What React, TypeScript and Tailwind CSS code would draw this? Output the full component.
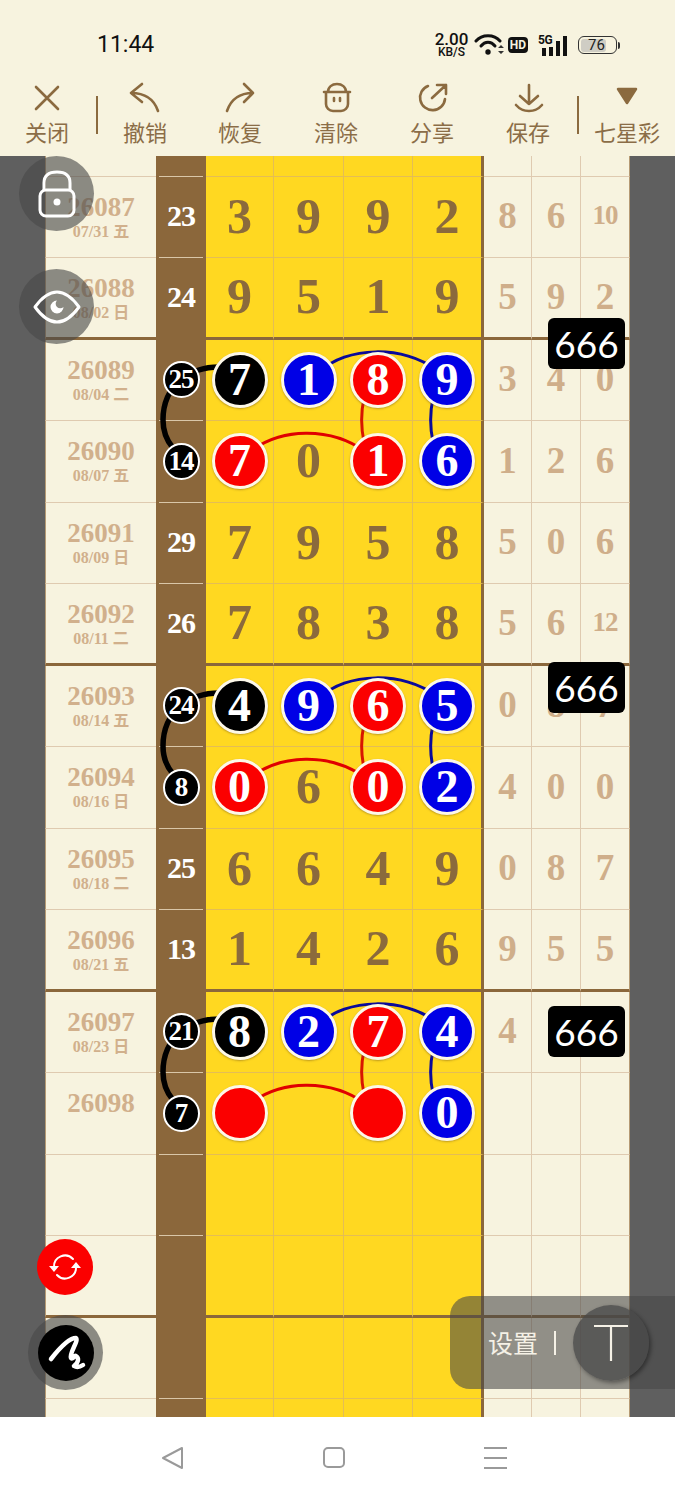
const serif = "font-['Liberation_Serif','Noto_Sans_CJK_SC',serif]";

type Ball = { n: string; c?: 'k' | 'b' | 'r' };
type Row = {
  id?: string;
  date?: string;
  sum?: string;
  sumBall?: boolean;
  main?: (string | Ball)[];
  side?: string[];
  thick?: boolean;
};

const k = (n: string): Ball => ({ n, c: 'k' });
const b = (n: string): Ball => ({ n, c: 'b' });
const r = (n: string): Ball => ({ n, c: 'r' });

const rows: Row[] = [
  { date: '07/28 二' },
  { id: '26087', date: '07/31 五', sum: '23', main: ['3', '9', '9', '2'], side: ['8', '6', '10'] },
  { id: '26088', date: '08/02 日', sum: '24', main: ['9', '5', '1', '9'], side: ['5', '9', '2'], thick: true },
  { id: '26089', date: '08/04 二', sum: '25', sumBall: true, main: [k('7'), b('1'), r('8'), b('9')], side: ['3', '4', '0'] },
  { id: '26090', date: '08/07 五', sum: '14', sumBall: true, main: [r('7'), '0', r('1'), b('6')], side: ['1', '2', '6'] },
  { id: '26091', date: '08/09 日', sum: '29', main: ['7', '9', '5', '8'], side: ['5', '0', '6'] },
  { id: '26092', date: '08/11 二', sum: '26', main: ['7', '8', '3', '8'], side: ['5', '6', '12'], thick: true },
  { id: '26093', date: '08/14 五', sum: '24', sumBall: true, main: [k('4'), b('9'), r('6'), b('5')], side: ['0', '8', '7'] },
  { id: '26094', date: '08/16 日', sum: '8', sumBall: true, main: [r('0'), '6', r('0'), b('2')], side: ['4', '0', '0'] },
  { id: '26095', date: '08/18 二', sum: '25', main: ['6', '6', '4', '9'], side: ['0', '8', '7'] },
  { id: '26096', date: '08/21 五', sum: '13', main: ['1', '4', '2', '6'], side: ['9', '5', '5'], thick: true },
  { id: '26097', date: '08/23 日', sum: '21', sumBall: true, main: [k('8'), b('2'), r('7'), b('4')], side: ['4', '', ''] },
  { id: '26098', sum: '7', sumBall: true, main: [r(''), '', r(''), b('0')], side: ['', '', ''] },
  {},
  { thick: true },
  {},
  {},
];

const mainWidths = ['w-[68px]', 'w-[70px]', 'w-[69px]', 'w-[71px]'];
const sideWidths = ['w-[48px]', 'w-[49px]', 'w-[49px]'];

function MainBall({ ball }: { ball: Ball }) {
  const bg = ball.c === 'k' ? 'bg-black' : ball.c === 'b' ? 'bg-[#0000e6]' : 'bg-[#fb0000]';
  return (
    <div className={`relative z-10 flex h-[56px] w-[56px] items-center justify-center rounded-full border-[3px] border-[#fdf8e8] text-[46px] leading-none font-bold text-white shadow-[0_1px_2px_rgba(120,90,30,0.5)] ${bg}`}>
      {ball.n}
    </div>
  );
}

function TableRow({ row, first }: { row: Row; first?: boolean }) {
  const cream = row.thick ? 'border-b-[3px] border-b-[#8b673b]' : 'border-b border-b-[#dfcab0]';
  const yellow = row.thick ? 'border-b-[3px] border-b-[#8b673b]' : 'border-b border-b-[#e4bd55]';
  return (
    <div className={`flex h-[81.5px] w-[585px] ${first ? 'mt-[-61px]' : ''} ${serif}`}>
      <div className={`flex w-[111px] flex-col items-center border-l border-l-[#b59a74] bg-[#f7f3df] pt-[13px] text-[#d1b08c] font-bold ${cream}`}>
        <div className="h-[34px] text-[27px] leading-[34px]">{row.id}</div>
        <div className="h-[16px] text-[16px] leading-[16px]">{row.date}</div>
      </div>
      <div className="flex w-[50px] flex-col bg-[#8b673b]">
        <div className="flex flex-1 items-center justify-center text-[30px] leading-none font-bold text-white">
          {row.sum && !row.sumBall && <span className="pb-[2px] tracking-[-1px]">{row.sum}</span>}
          {row.sumBall && (
            <div className="relative z-10 flex h-[37px] w-[37px] items-center justify-center rounded-full border-2 border-white bg-black text-[27px] tracking-[-1px]">
              {row.sum}
            </div>
          )}
        </div>
        <div className={`mx-[3px] h-px shrink-0 ${row.thick ? 'bg-[#8b673b]' : 'bg-[#d9c6a8]'}`} />
      </div>
      {mainWidths.map((w, i) => {
        const v = row.main?.[i];
        return (
          <div
            key={i}
            className={`flex items-center justify-center bg-[#ffd821] text-[50px] leading-none font-bold text-[#8b6a3c] ${w} ${yellow} ${typeof v === 'string' ? 'pb-[2px]' : ''} ${i === 3 ? 'border-r-[3px] border-r-[#8b673b]' : 'border-r border-r-[#e4bd55]'}`}
          >
            {typeof v === 'string' ? v : v ? <MainBall ball={v} /> : null}
          </div>
        );
      })}
      {sideWidths.map((w, i) => {
        const v = row.side?.[i] ?? '';
        return (
          <div
            key={i}
            className={`flex items-center justify-center bg-[#f7f3df] pb-[2px] font-bold leading-none text-[#cfae8a] ${v.length > 1 ? 'text-[27px] tracking-[-1px]' : 'text-[37px]'} ${w} ${cream} ${i < 2 ? 'border-r border-r-[#dfcab0]' : 'border-r border-r-[#b59a74]'}`}
          >
            {v}
          </div>
        );
      })}
    </div>
  );
}

function Arcs({ dy }: { dy: number }) {
  return (
    <g transform={`translate(0 ${dy})`} fill="none" strokeLinecap="round">
      <path d="M222 367 C190 366 163 385 163 420 C163 431 167 441 173 448" stroke="#000" strokeWidth="5.5" />
      <path d="M250 452 C280 428 330 426 366 452" stroke="#e00000" strokeWidth="3" />
      <path d="M364 398 C361 412 361 428 364 442" stroke="#d81500" strokeWidth="3" />
      <path d="M320 372 C345 346 405 345 436 370" stroke="#0a0a9a" strokeWidth="3" />
      <path d="M433 398 C430 412 430 428 433 442" stroke="#0a0a9a" strokeWidth="3" />
    </g>
  );
}

function Badge({ className }: { className: string }) {
  return (
    <div className={`absolute left-[548px] z-20 flex h-[51px] w-[77px] items-center justify-center rounded-[6px] bg-black font-['Lato',sans-serif] text-[37px] leading-none text-white ${className}`}>
      666
    </div>
  );
}

const stroke = { fill: 'none', stroke: '#8b6a3f', strokeWidth: 2.6, strokeLinecap: 'round' as const, strokeLinejoin: 'round' as const };

const tools = [
  { label: '撤销', nudge: '', icon: <path d="M13 2 L2 11 L13 20 M2 11 C16 11 25 17 29 29" {...stroke} /> },
  { label: '恢复', nudge: 'mr-[2px]', icon: <path d="M19 2 L28 11 L19 20 M28 11 C14 11 6 17 2 29" {...stroke} /> },
  {
    label: '清除',
    nudge: 'mr-[2px]',
    icon: (
      <path
        d="M3 10 H29 M7 10 C7 5 11 2 16 2 C21 2 25 5 25 10 M5 10 V22 A7 7 0 0 0 12 29 H20 A7 7 0 0 0 27 22 V10 M13 16 V19 M19 16 V19"
        {...stroke}
      />
    ),
  },
  { label: '分享', nudge: 'mr-[2px]', icon: <path d="M11 4 A12.5 12.5 0 1 0 28 17 M15 16 L29 3 M20 3 H29 V12" {...stroke} /> },
  { label: '保存', nudge: 'mr-[2px]', icon: <path d="M16 3 V22 M7 14 L16 22 L25 14 M3 23 C10 31 22 31 29 23" {...stroke} /> },
];

function Tool({ label, icon, className, nudge = '' }: { label: string; icon: React.ReactNode; className: string; nudge?: string }) {
  return (
    <div className={`flex flex-col items-center ${className}`}>
      <svg width="32" height="32" viewBox="0 0 32 32" className="shrink-0">{icon}</svg>
      <div className={`mt-[2px] text-[22px] leading-[30px] whitespace-nowrap text-[#8b6d47] ${nudge}`}>{label}</div>
    </div>
  );
}

export default function App() {
  return (
    <div className="relative flex h-[1500px] w-[675px] flex-col overflow-hidden bg-white font-['Noto_Sans_CJK_SC',sans-serif]">
      <header className="h-[156px] shrink-0 bg-[#f7f3df]">
        <div className="flex h-[76px] items-center justify-between pt-[14px] pr-[55px] pl-[97px]">
          <div className="font-['Roboto',sans-serif] text-[23px] text-[#111]">11:44</div>
          <div className="flex items-center text-[#111]">
            <div className="flex w-[33px] flex-col items-center font-['Roboto',sans-serif] font-medium">
              <div className="text-[17px] leading-[13px]">2.00</div>
              <div className="text-[12px] leading-[12px]">KB/S</div>
            </div>
            <svg width="30" height="24" viewBox="0 0 30 24" className="ml-[6px]">
              <g fill="none" stroke="#111" strokeWidth="3" strokeLinecap="round">
                <path d="M2 8 C8 1 20 1 26 8" />
                <path d="M7 13 C11 8 17 8 21 13" />
              </g>
              <circle cx="14" cy="19" r="2.7" fill="#111" />
              <path d="M24 15 L27 12 L30 15 Z M24 18 L27 21 L30 18 Z" fill="#333" />
            </svg>
            <div className="ml-[4px] flex h-[16px] w-[20px] items-center justify-center rounded-[4px] bg-[#111] font-['Roboto',sans-serif] text-[12px] leading-none font-bold text-[#f7f3df]">HD</div>
            <div className="relative ml-[10px] h-[21px] w-[30px]">
              <svg width="30" height="21" viewBox="0 0 30 21">
                <path d="M4 13 H8 V21 H4 Z M11 12 H15 V21 H11 Z M18 6 H22 V21 H18 Z M25 1 H29 V21 H25 Z" fill="#111" />
              </svg>
              <div className="absolute top-0 left-0 font-['Roboto',sans-serif] text-[12px] leading-[11px] font-bold tracking-[-0.5px]">5G</div>
            </div>
            <div className="ml-[10px] flex h-[18px] w-[39px] items-center rounded-[6px] border-[1.5px] border-[#333] p-[1.5px]">
              <div className="flex h-full w-[76%] items-center justify-center rounded-[3px] bg-[#cfcdc4] pl-[6px] font-['Roboto',sans-serif] text-[15px] leading-none text-[#222]">76</div>
            </div>
            <div className="ml-[1px] h-[7px] w-[2px] rounded-r bg-[#333]" />
          </div>
        </div>
        <div className="flex h-[80px] items-start pt-[6px]">
          <Tool label="关闭" className="w-[96px] pr-[2px]" icon={<path d="M5 5 L27 27 M27 5 L5 27" {...stroke} />} />
          <div className="mt-[14px] mr-[-1px] h-[38px] w-[2px] bg-[#8b6a3f]" />
          {tools.map((t) => (
            <Tool key={t.label} label={t.label} icon={t.icon} nudge={t.nudge} className="w-[96px]" />
          ))}
          <div className="mt-[14px] h-[38px] w-[2px] bg-[#8b6a3f]" />
          <Tool
            label="七星彩"
            className="w-[96px]"
            icon={<path d="M7 7 H25 L16 21 Z" fill="#8b6a3f" stroke="#8b6a3f" strokeWidth="2.5" strokeLinejoin="round" />}
          />
        </div>
      </header>

      <main className="relative h-[1261px] shrink-0 overflow-hidden bg-[#5f5f5f] px-[45px]">
        {rows.map((row, i) => (
          <TableRow key={i} row={row} first={i === 0} />
        ))}
        <svg className="absolute top-0 left-0" width="675" height="1261" viewBox="0 156 675 1261">
          <Arcs dy={0} />
          <Arcs dy={326} />
          <Arcs dy={652} />
        </svg>
        <Badge className="top-[162px]" />
        <Badge className="top-[506px]" />
        <Badge className="top-[850px]" />
      </main>

      <nav className="flex h-[83px] shrink-0 items-center bg-white pl-[160px] pb-[2px]">
        <svg width="24" height="24" viewBox="0 0 24 24">
          <path d="M22 2 V22 L3 12 Z" fill="none" stroke="#9a9a9a" strokeWidth="2" strokeLinejoin="round" />
        </svg>
        <div className="ml-[139px] h-[21px] w-[22px] rounded-[5px] border-2 border-[#9a9a9a]" />
        <div className="ml-[139px] flex h-[22px] w-[23px] flex-col justify-between">
          <div className="h-[2px] bg-[#9a9a9a]" />
          <div className="h-[2px] bg-[#9a9a9a]" />
          <div className="h-[2px] bg-[#9a9a9a]" />
        </div>
      </nav>

      {/* floating controls */}
      <div className="absolute top-[156px] left-[19px] z-30 flex h-[75px] w-[75px] items-center justify-center rounded-full bg-[rgba(72,72,72,0.62)]">
        <svg width="40" height="50" viewBox="0 0 40 50" fill="none" stroke="#fff" strokeWidth="3">
          <path d="M7 21 V14 C7 6 12 3 20 3 C28 3 33 6 33 14 V21" />
          <rect x="3" y="21" width="34" height="26" rx="6" />
          <circle cx="20" cy="33" r="3.5" fill="#fff" stroke="none" />
        </svg>
      </div>
      <div className="absolute top-[269px] left-[19px] z-30 flex h-[75px] w-[75px] items-center justify-center rounded-full bg-[rgba(72,72,72,0.62)]">
        <svg width="48" height="34" viewBox="0 0 48 34">
          <path d="M2 17 C10 6 17 2 24 2 C31 2 38 6 46 17 C38 28 31 32 24 32 C17 32 10 28 2 17 Z" fill="none" stroke="#fff" strokeWidth="3" strokeLinejoin="round" />
          <path d="M24 10.5 A6.5 6.5 0 1 0 30.5 17 A4.5 4.5 0 0 1 24 10.5 Z" fill="#fff" />
        </svg>
      </div>
      <div className="absolute top-[1239px] left-[37px] z-30 flex h-[56px] w-[56px] items-center justify-center rounded-full bg-[#fb0000]">
        <svg width="34" height="30" viewBox="-17 -15 34 30">
          <g fill="none" stroke="#fff" strokeWidth="2" strokeLinecap="round">
            <path d="M-11 0 A11 11 0 0 1 8 -8" />
            <path d="M11 0 A11 11 0 0 1 -8 8" />
          </g>
          <path d="M-16 -1 H-6 L-11 5 Z M16 1 H6 L11 -5 Z" fill="#fff" />
        </svg>
      </div>
      <div className="absolute top-[1315px] left-[28px] z-30 flex h-[75px] w-[75px] items-center justify-center rounded-full bg-[rgba(72,72,72,0.62)]">
        <div className="flex h-[56px] w-[56px] items-center justify-center rounded-full bg-black">
          <svg width="56" height="56" viewBox="0 0 56 56" fill="none" stroke="#fff" strokeWidth="4.5" strokeLinecap="round" strokeLinejoin="round">
            <path d="M13 34 C20 25 31 13 38 13 C41 16 31 28 33 33 C35 35 36 30 38 31 C41 33 41 37 36 41 C39 43 42 42 45 40" />
          </svg>
        </div>
      </div>
      <div className="absolute top-[1296px] left-[450px] z-30 flex h-[93px] w-[225px] items-center rounded-l-[20px] bg-[rgba(70,70,70,0.58)] pl-[38px]">
        <div className="text-[25px] leading-none text-[#f5f1e6]">设置</div>
        <div className="ml-[16px] h-[24px] w-[2px] bg-[#f5f1e6]" />
        <div className="ml-[17px] flex h-[76px] w-[76px] items-center justify-center rounded-full bg-[rgba(72,72,72,0.75)] shadow-[2px_2px_4px_rgba(0,0,0,0.4)]">
          <svg width="40" height="40" viewBox="0 0 40 40" fill="none" stroke="#f5f1e6" strokeWidth="2.2">
            <path d="M3 3 H37 M20 3 V38" />
          </svg>
        </div>
      </div>
    </div>
  );
}
